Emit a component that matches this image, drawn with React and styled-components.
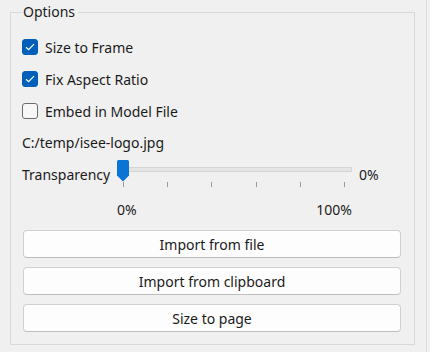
import React from "react";
import styled, { createGlobalStyle } from "styled-components";

const Global = createGlobalStyle`
  html, body { margin: 0; padding: 0; background: #f0f0f0; }
  body { font-family: "Noto Sans", "Open Sans", sans-serif; color: #1b1b1b; }
  * { box-sizing: border-box; }
`;

const Page = styled.div`
  width: 427px;
  height: 352px;
  padding: 4px 0 0 10px;
  border-right: 1px solid #dcdcdc;
  background: #f0f0f0;
`;

const Group = styled.fieldset`
  margin: 0;
  padding: 0 13px 11px 11px;
  width: 405px;
  height: 341px;
  border: 1px solid #d9d9d9;
  min-width: 0;
`;

const Legend = styled.legend`
  padding: 0 3px 0 1px;
  margin-left: 0;
  font-size: 14px;
  line-height: 16px;
  color: #1b1b1b;
`;

const Column = styled.div`
  display: flex;
  flex-direction: column;
  padding-top: ${(p) => p.$top || 0}px;
  gap: ${(p) => p.$gap || 0}px;
`;

const Row = styled.label`
  display: flex;
  align-items: center;
  height: 20px;
  gap: 7px;
  font-size: 14px;
  cursor: default;
`;

const Box = styled.span`
  width: 16px;
  height: 16px;
  border-radius: 3px;
  display: flex;
  align-items: center;
  justify-content: center;
  background: ${(p) => (p.$checked ? "#005fb8" : "#f7f7f7")};
  border: 1px solid ${(p) => (p.$checked ? "#005fb8" : "#6b6b6b")};
`;

const Text = styled.div`
  height: 20px;
  line-height: 20px;
  font-size: 14px;
`;

const SliderRow = styled.div`
  display: flex;
  align-items: center;
  height: 28px;
  margin-top: 7px;
`;

const SliderLabel = styled.span`
  width: 95px;
  font-size: 14px;
`;

const SliderArea = styled.div`
  position: relative;
  width: 235px;
  height: 28px;
`;

const Track = styled.div`
  position: absolute;
  top: 7px;
  left: 0;
  right: 0;
  height: 5px;
  background: #e5e5e5;
  border: 1px solid #d4d4d4;
  border-radius: 1px;
`;

const Thumb = styled.svg`
  position: absolute;
  top: 0;
  left: 0;
`;

const Ticks = styled.div`
  position: absolute;
  top: 22px;
  left: 6px;
  width: 222px;
  height: 5px;
  display: flex;
  justify-content: space-between;
`;

const Tick = styled.span`
  width: 1px;
  height: 5px;
  background: #9a9a9a;
`;

const Value = styled.span`
  margin-left: 7px;
  font-size: 14px;
`;

const TickLabels = styled.div`
  display: flex;
  justify-content: space-between;
  width: 235px;
  margin-left: 95px;
  margin-top: 12px;
  height: 20px;
  line-height: 20px;
  font-size: 14px;
`;

const Buttons = styled.div`
  display: flex;
  flex-direction: column;
  gap: 9px;
  margin-top: 10px;
  padding-left: 1px;
`;

const Button = styled.button`
  width: 378px;
  height: 28px;
  background: #fdfdfd;
  border: 1px solid #d0d0d0;
  border-bottom-color: #bdbdbd;
  border-radius: 4px;
  font-family: inherit;
  font-size: 14px;
  color: #1b1b1b;
  padding: 0;
`;

function Checkbox({ checked, label }) {
  return (
    <Row>
      <Box $checked={checked}>
        {checked && (
          <svg width="10" height="8" viewBox="0 0 10 8">
            <path d="M1 4.2 L3.6 6.6 L9 1.2" fill="none" stroke="#fff" strokeWidth="1.2" />
          </svg>
        )}
      </Box>
      {label}
    </Row>
  );
}

export default function App() {
  const ticks = [0, 1, 2, 3, 4, 5];
  return (
    <>
      <Global />
      <Page>
        <Group>
          <Legend>Options</Legend>
          <Column $top={17} $gap={12}>
            <Checkbox checked label="Size to Frame" />
            <Checkbox checked label="Fix Aspect Ratio" />
            <Checkbox label="Embed in Model File" />
            <Text>C:/temp/isee-logo.jpg</Text>
          </Column>
          <SliderRow>
            <SliderLabel>Transparency</SliderLabel>
            <SliderArea>
              <Track />
              <Ticks>
                {ticks.map((t) => (
                  <Tick key={t} />
                ))}
              </Ticks>
              <Thumb width="12" height="22" viewBox="0 0 12 22">
                <path d="M1.5 0 H10.5 Q12 0 12 1.5 V15.5 L6 21.5 L0 15.5 V1.5 Q0 0 1.5 0 Z" fill="#0a74d4" />
              </Thumb>
            </SliderArea>
            <Value>0%</Value>
          </SliderRow>
          <TickLabels>
            <span>0%</span>
            <span>100%</span>
          </TickLabels>
          <Buttons>
            <Button>Import from file</Button>
            <Button>Import from clipboard</Button>
            <Button>Size to page</Button>
          </Buttons>
        </Group>
      </Page>
    </>
  );
}
